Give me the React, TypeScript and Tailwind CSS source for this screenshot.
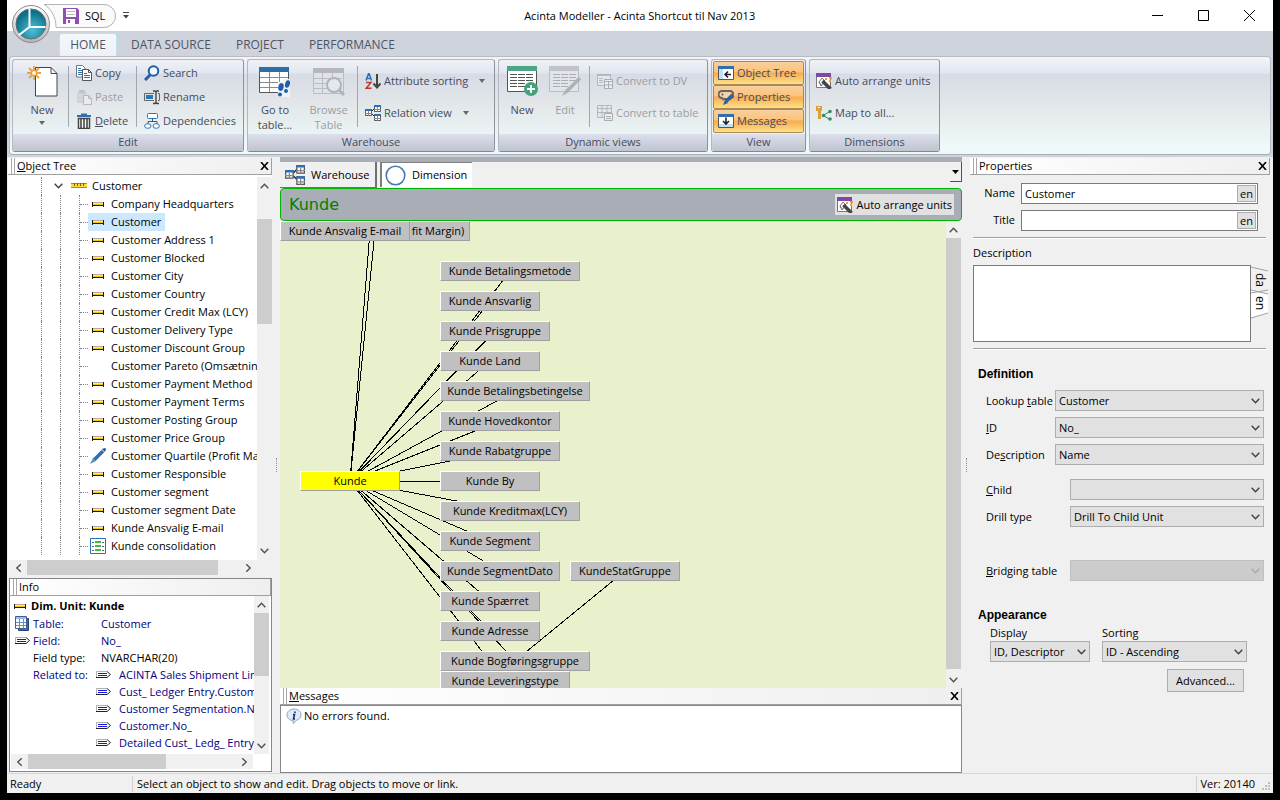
import type { ReactNode } from "react";
import clsx from "clsx";

type IconProps = { className?: string };

/* ---------- Icons ---------- */

const Svg = ({ size = 16, children }: { size?: number; children: ReactNode }) => (
  <svg width={size} height={size} viewBox={`0 0 ${size} ${size}`} fill="none" className="shrink-0" aria-hidden="true">
    {children}
  </svg>
);

const SaveIcon = () => (
  <Svg>
    <path d="M0 0h14l2 2v14H0z" fill="#8e4fb0" />
    <path d="M3 1h10v8H3z" fill="#fff" />
    <path d="M4 3.500h8M4 6.500h8" stroke="#b9b9b9" />
    <path d="M3 11h9v5H3z" fill="#fff" />
    <path d="M5 12h2v3H5z" fill="#8e4fb0" />
  </Svg>
);

const NewPageIcon = () => (
  <Svg size={32}>
    <path d="M9.500 2.500h15.500l6 6v22.500h-21.500z" fill="#fff" stroke="#444" />
    <path d="M25 2.500v6h6" stroke="#444" />
    <path d="M8 1v14M1 8h14M3 3l10 10M13 3L3 13" stroke="#e8a33d" strokeWidth="1.800" />
    <circle cx="8" cy="8" r="3.500" fill="#e8a33d" />
    <circle cx="8" cy="8" r="2" fill="#fff3dc" />
  </Svg>
);

const CopyIcon = () => (
  <Svg>
    <path d="M.5.500h6l2.500 2.500v9h-8.500z" fill="#fff" stroke="#777" />
    <path d="M2 3.500h3M2 5.500h4M2 7.500h4M2 9.500h4" stroke="#2e75b6" />
    <path d="M6.500 4.500h6l3 3v8h-9z" fill="#fff" stroke="#555" />
    <path d="M12.500 4.500v3h3" stroke="#555" />
    <path d="M8 8.500h3M8 10.500h6M8 12.500h6" stroke="#2e75b6" />
  </Svg>
);

const PasteIcon = () => (
  <Svg>
    <path d="M1 3h10v11H1z" fill="#d0d3d8" />
    <path d="M3 1h6v3H3z" fill="#bfc2c7" />
    <path d="M7.500 6.500h5l3 3v6h-8z" fill="#e9ebee" stroke="#b4b7bc" />
    <path d="M12.500 6.500v3h3" stroke="#b4b7bc" />
  </Svg>
);

const DeleteIcon = () => (
  <Svg>
    <path d="M1 3h14M5 1.500h6" stroke="#2e6fb4" strokeWidth="1.800" />
    <path d="M2.500 5.500h11v10h-11z" fill="#fff" stroke="#444" strokeWidth="1.500" />
    <path d="M5 6v9M8 6v9M11 6v9" stroke="#444" strokeWidth="1.600" />
  </Svg>
);

const SearchIcon = () => (
  <Svg>
    <circle cx="9.500" cy="6" r="4.800" fill="#f4f8ff" stroke="#1f5fa8" strokeWidth="2" />
    <path d="M6 10l-5 5" stroke="#1f5fa8" strokeWidth="3" />
  </Svg>
);

const RenameIcon = () => (
  <Svg>
    <path d="M10 4.500H.5v7H10M14 4.500h1.500v7H14" stroke="#666" />
    <path d="M2 6h7v4H2z" fill="#2e75b6" />
    <path d="M9 2h2l1 1 1-1h2M9 14.500h2l1-1 1 1h2M12 3v11" stroke="#444" strokeWidth="1.400" />
  </Svg>
);

const DependenciesIcon = () => (
  <Svg>
    <rect x="3.500" y=".5" width="10" height="5" rx="1" fill="#fff" stroke="#2e75b6" />
    <path d="M8.500 6v3M4 11V8.500h9V11" stroke="#555" />
    <ellipse cx="3.800" cy="13" rx="3.200" ry="2.300" fill="#fff" stroke="#2e75b6" />
    <ellipse cx="12.200" cy="13" rx="3.200" ry="2.300" fill="#fff" stroke="#2e75b6" />
  </Svg>
);

const GoToTableIcon = () => (
  <Svg size={32}>
    <path d="M.5 2.500h29v25H.5z" fill="#fff" stroke="#555" />
    <path d="M0 2h30v5H0z" fill="#2e6da8" />
    <path d="M1 12.500h28M1 17.500h28M1 22.500h28M10.500 7v20M20.500 7v20" stroke="#8a8a8a" />
    <path d="M19 27V17h5v-3h7v18H19z" fill="#eef1f6" />
    <ellipse cx="22" cy="22" rx="2.600" ry="4" fill="#1f5fa8" transform="rotate(15 22 22)" />
    <circle cx="21" cy="29.500" r="2" fill="#1f5fa8" />
    <ellipse cx="28.500" cy="19" rx="2.400" ry="3.800" fill="#1f5fa8" transform="rotate(15 28.500 19)" />
    <circle cx="27" cy="26" r="2" fill="#1f5fa8" />
  </Svg>
);

const BrowseTableIcon = () => (
  <Svg size={32}>
    <path d="M.5 3.500h30v25H.5z" fill="#dfe2e8" stroke="#b9bcc2" />
    <path d="M0 3h31v5H0z" fill="#b4b7bd" />
    <path d="M1 13.500h28M1 18.500h28M1 23.500h28M9.500 8v20M19.500 8v20" stroke="#b9bcc2" />
    <circle cx="21" cy="20" r="7" fill="#e4e7ec" stroke="#b0b3b8" strokeWidth="2" />
    <path d="M26 25l5 5" stroke="#b0b3b8" strokeWidth="3" />
  </Svg>
);

const SortIcon = () => (
  <Svg>
    <path d="M1 7.500L3.500.8h.6L6.600 7.500M2 5.500h3.600" stroke="#2e6fb4" strokeWidth="1.500" />
    <path d="M1 9.500h5L1.200 15.200H6.500" stroke="#c0392b" strokeWidth="1.500" />
    <path d="M12 1v13M8.500 10.500L12 14.500l3.500-4" stroke="#444" strokeWidth="2" />
  </Svg>
);

const MiniTable = ({ x, y }: { x: number; y: number }) => (
  <g>
    <path d={`M${x + 0.5} ${y + 0.5}h6v6h-6z`} fill="#fff" stroke="#555" />
    <path d={`M${x} ${y}h7v2h-7z`} fill="#2e6fb4" />
    <path d={`M${x + 3.5} ${y + 2}v5M${x} ${y + 4.5}h7`} stroke="#888" />
  </g>
);

const RelationIcon = ({ size = 16 }: { size?: number }) => (
  <svg width={size} height={size} viewBox="0 0 16 16" fill="none" className="shrink-0" aria-hidden="true">
    <path d="M6 7l4-4M6 8l4 4" stroke="#222" />
    <MiniTable x={0} y={4} />
    <MiniTable x={9} y={0} />
    <MiniTable x={9} y={9} />
  </svg>
);

const SheetLines = ({ stroke }: { stroke: string }) => (
  <path
    d="M4 9.500h7M4 12.500h7M4 15.500h7M4 18.500h7M4 21.500h7M12 9.500h7M12 12.500h7M12 15.500h7M12 18.500h7M12 21.500h7M20 9.500h7M20 12.500h7M20 15.500h7"
    stroke={stroke}
    strokeWidth="1.200"
  />
);

const NewViewIcon = () => (
  <Svg size={32}>
    <path d="M1.500 2.500h29v24h-29z" fill="#fff" stroke="#555" />
    <path d="M1 1h30v5H1z" fill="#4ca585" />
    <SheetLines stroke="#555" />
    <circle cx="25" cy="24" r="7" fill="#45a37c" />
    <path d="M25 20v8M21 24h8" stroke="#fff" strokeWidth="1.800" />
  </Svg>
);

const EditViewIcon = () => (
  <Svg size={32}>
    <path d="M.5 2.500h29v24H.5z" fill="#e1e4e9" stroke="#b9bcc2" />
    <path d="M0 1h30v5H0z" fill="#c0c3c9" />
    <SheetLines stroke="#abaeb4" />
    <path d="M31 13L18 26" stroke="#aeb1b6" strokeWidth="3.500" />
    <path d="M17 24l-4 7 7-4z" fill="#aeb1b6" />
  </Svg>
);

const ConvertDvIcon = () => (
  <Svg>
    <path d="M.5 1.500h13v11H.5z" fill="#e4e7ec" stroke="#b4b7bc" />
    <path d="M0 1h14v2H0z" fill="#b4b7bc" />
    <path d="M2 5.500h4M2 7.500h4M2 9.500h4" stroke="#b4b7bc" />
    <path d="M7.500 6.500h8v9h-8z" fill="#eceef1" stroke="#a9acb1" />
    <path d="M7 8.500h9M7 12h9M11.500 8v8" stroke="#a9acb1" />
  </Svg>
);

const ConvertTableIcon = () => (
  <Svg>
    <path d="M.5.500h14v12H.5z" fill="#e4e7ec" stroke="#b4b7bc" />
    <path d="M0 3.500h15M0 7.500h15M5 1v11M10 1v11" stroke="#b4b7bc" />
    <path d="M7.500 8.500h8v7h-8z" fill="#eceef1" stroke="#a9acb1" />
    <path d="M9 11.500h5M9 13.500h5" stroke="#a9acb1" />
  </Svg>
);

const TreePanelIcon = () => (
  <Svg>
    <path d="M.5 1.500h15v13H.5z" fill="#fff" stroke="#555" />
    <path d="M0 1h16v3H0z" fill="#2e6fb4" />
    <path d="M1 4h4v10H1z" fill="#bfe0f5" />
    <path d="M13 9.500H7M10 6.500l-3 3 3 3" stroke="#222" strokeWidth="1.600" />
  </Svg>
);

const PropertiesIcon = () => (
  <Svg>
    <path d="M4 2h9l2 2v4l-3 2H6M4 2a3.500 3.500 0 000 7l2 2" fill="#f4d3a4" stroke="#666" strokeWidth="2" />
    <circle cx="4.500" cy="5.500" r="1" fill="#555" />
    <path d="M14.500 6L8 12.500" stroke="#2463a8" strokeWidth="3.500" />
    <path d="M7 11l-2 5 5-2z" fill="#2463a8" />
  </Svg>
);

const MessagesPanelIcon = () => (
  <Svg>
    <path d="M.5 1.500h15v13H.5z" fill="#fff" stroke="#555" />
    <path d="M0 1h16v3H0z" fill="#2e6fb4" />
    <path d="M1 11h14v3H1z" fill="#bfe0f5" />
    <path d="M8 4.500v6M5 8l3 3 3-3" stroke="#222" strokeWidth="1.600" />
  </Svg>
);

const ArrangeIcon = () => (
  <Svg>
    <path d="M.5 1.500h14v13H.5z" fill="#fff" stroke="#777" />
    <path d="M0 0h15v4H0z" fill="#7e48a5" />
    <path d="M3 9l3-4 3 3-4 5zM3 9l3 4" stroke="#777" />
    <path d="M6.500 8l8 8" stroke="#444" strokeWidth="3.500" />
    <path d="M9 5h2v2H9zM13 7h2v2h-2zM13 4h3v2h-3z" fill="#e8a33d" />
  </Svg>
);

const MapIcon = () => (
  <Svg>
    <path d="M0 1h6v5H5v8H2V6H0z" fill="#dca13d" />
    <path d="M2 2.500h2" stroke="#fff" />
    <path d="M7 10.500l7-4M7 10.500l7 4" stroke="#2f8f63" />
    <circle cx="7.500" cy="10.500" r="1.800" fill="#2f8f63" />
    <circle cx="14" cy="6.500" r="1.800" fill="#2f8f63" />
    <circle cx="14" cy="14" r="1.800" fill="#2f8f63" />
  </Svg>
);

const UnitIcon = () => (
  <Svg>
    <path d="M3 6h10v1H3z" fill="#b9a9a0" />
    <path d="M3 7h10v1H3z" fill="#fff35c" />
    <path d="M3 8h10v1H3z" fill="#f0c800" />
    <path d="M3 9h10v1H3zM2 6h1v5H2zM13 6h1v5h-1z" fill="#1a1a1a" />
  </Svg>
);

const DimensionIcon = () => (
  <Svg>
    <path d="M0 5h16v5H0z" fill="#b8860b" />
    <path d="M0 6h16v3H0z" fill="#ffd83c" />
    <path d="M3.500 5v3M6.500 5v3M9.500 5v3M12.500 5v3" stroke="#8a5c00" />
  </Svg>
);

const PencilIcon = () => (
  <Svg>
    <path d="M13 3L4 12" stroke="#2e6fb4" strokeWidth="3.500" />
    <path d="M3 10l-3 6 6-3z" fill="#5d8fc4" />
    <path d="M12 1l3-1 1 1-1 3z" fill="#1d4f8b" />
  </Svg>
);

const ConsolidationIcon = () => (
  <Svg>
    <path d="M.5.500h15v15H.5z" fill="#fff" stroke="#2e6fb4" />
    <path d="M2 4.500h2M2 8.500h2M2 12.500h2M12 4.500h2M12 8.500h2M12 12.500h2" stroke="#4d6c8d" />
    <path d="M5 4h6M5 8h6M5 12h6" stroke="#49b63d" strokeWidth="2" />
  </Svg>
);

const TablesIcon = () => (
  <Svg>
    <path d="M3.500 2.500h10v12h-10z" fill="#3d6cb5" stroke="#23427c" />
    <path d="M.5.500h11v12H.5z" fill="#fff" stroke="#3f5f96" />
    <path d="M1 1h10v2H1z" fill="#9dbbe6" />
    <path d="M1 6.500h10M1 9.500h10M4.500 3v9M8.500 3v9" stroke="#6d8cc0" />
  </Svg>
);

const FieldIcon = () => (
  <Svg>
    <path d="M.5 4.500H11l4 3-4 3H.5z" fill="#fff" />
    <path d="M.5 11V4.500H11" stroke="#b0b0b0" />
    <path d="M0 10.500h11l3.500-3-3.500-3" stroke="#222" />
    <path d="M2 6h9v1H2zM2 8h9v1H2z" fill="#1414f0" />
  </Svg>
);

const InfoIcon = () => (
  <Svg>
    <path d="M8 1c4 0 7 2.400 7 5.800 0 3-2 4.800-4.500 5.500L7 15.500l.3-2.800C3.800 12.500 1 10.200 1 7c0-3.500 3-6 7-6z" fill="#dfeaf7" stroke="#8ba6c1" />
    <path d="M9 3.500v1.600M7 6.500h1.500L7.500 11H9" stroke="#1d2d7c" strokeWidth="1.600" />
  </Svg>
);

const Orb = () => (
  <svg width="40" height="40" viewBox="0 0 40 40" aria-hidden="true">
    <defs>
      <linearGradient id="rim" x1="0" y1="0" x2="0" y2="1">
        <stop offset="0" stopColor="#fff" />
        <stop offset="1" stopColor="#b5b5b5" />
      </linearGradient>
      <radialGradient id="face" cx=".55" cy=".7" r=".6">
        <stop offset="0" stopColor="#4fc0d6" />
        <stop offset="1" stopColor="#0a7188" />
      </radialGradient>
    </defs>
    <circle cx="20" cy="20" r="18.500" fill="url(#rim)" stroke="#8a8a8a" />
    <circle cx="20" cy="20" r="15" fill="url(#face)" stroke="#5b6e74" />
    <path d="M18.500 5v18M18.500 23h16M18.500 23L8 31" stroke="#fff" strokeWidth="2" fill="none" />
  </svg>
);

const CloseIcon = ({ className }: IconProps) => (
  <svg width="9" height="8" viewBox="0 0 9 8" className={className} aria-hidden="true">
    <path d="M1 0l7 8M8 0L1 8" stroke="#000" strokeWidth="1.600" />
  </svg>
);

const Caret = () => (
  <svg width="6" height="4" viewBox="0 0 6 4" className="shrink-0" aria-hidden="true">
    <path d="M0 0h6L3 4z" fill="#666" />
  </svg>
);

const Chevron = ({ className }: IconProps) => (
  <svg width="9" height="6" viewBox="0 0 9 6" fill="none" className={className} aria-hidden="true">
    <path d="M.7.700l3.800 4L8.300.700" stroke="currentColor" strokeWidth="1.400" />
  </svg>
);

/* ---------- Ribbon ---------- */

const RibbonGroup = ({ title, className, children }: { title: string; className?: string; children: ReactNode }) => (
  <section className={clsx("flex flex-col shrink-0 rounded-[3px] border border-[#b4b7bf] border-b-[#85878d] border-r-[#8f9299] overflow-hidden", className)}>
    <div className="flex flex-1 pt-px">{children}</div>
    <h2 className="h-[17px] text-center leading-4 bg-linear-to-b from-[#dcdfec] to-[#c0c4cf]">{title}</h2>
  </section>
);

const BigButton = ({ icon, label, disabled, className, caret }: { icon: ReactNode; label: ReactNode; disabled?: boolean; className?: string; caret?: boolean }) => (
  <button disabled={disabled} className={clsx("flex flex-col items-center pt-1 leading-[15px] disabled:text-[#9a9da3]", className)}>
    {icon}
    <span className="mt-[5px]">{label}</span>
    {caret && <span className="mt-1"><Caret /></span>}
  </button>
);

const SmallButton = ({ icon, label, disabled, tall, caret }: { icon: ReactNode; label: ReactNode; disabled?: boolean; tall?: boolean; caret?: boolean }) => (
  <button disabled={disabled} className={clsx("flex items-center gap-[3px] whitespace-nowrap disabled:text-[#9a9da3]", tall ? "h-8" : "h-6")}>
    {icon}
    <span>{label}</span>
    {caret && <span className="ml-2"><Caret /></span>}
  </button>
);

const Separator = () => <div className="w-px h-[61px] mt-[5px] mr-[7px] bg-[#a3a6ac]" />;

const viewToggles = [
  { label: "Object Tree", icon: <TreePanelIcon /> },
  { label: "Properties", icon: <PropertiesIcon /> },
  { label: "Messages", icon: <MessagesPanelIcon /> },
];

const Ribbon = () => (
  <div className="bg-[#cfd3dc] px-0.5 pb-0.5">
    <div className="flex gap-[3px] h-[99px] p-0.5 rounded border border-[#b9bcc4] border-b-[#a9aeb6] bg-[linear-gradient(#f3f4f9_0px,#e2e6ef_16px,#d6dbe6_17px,#e3e7e9_48px,#eef9f9_90px)] text-[#444b5c]">
      <RibbonGroup title="Edit" className="w-[232px]">
        <BigButton icon={<NewPageIcon />} label="New" caret className="w-[48px] ml-[7px] pr-1" />
        <Separator />
        <div className="w-[60px]">
          <SmallButton icon={<CopyIcon />} label="Copy" />
          <SmallButton icon={<PasteIcon />} label="Paste" disabled />
          <SmallButton icon={<DeleteIcon />} label={<><u>D</u>elete</>} />
        </div>
        <Separator />
        <div>
          <SmallButton icon={<SearchIcon />} label="Search" />
          <SmallButton icon={<RenameIcon />} label="Rename" />
          <SmallButton icon={<DependenciesIcon />} label="Dependencies" />
        </div>
      </RibbonGroup>

      <RibbonGroup title="Warehouse" className="w-[248px]">
        <BigButton icon={<GoToTableIcon />} label={<>Go to<br />table...</>} className="w-[54px]" />
        <BigButton icon={<BrowseTableIcon />} label={<>Browse<br />Table</>} disabled className="w-[53px] mr-0.5" />
        <Separator />
        <div className="pt-1">
          <SmallButton icon={<SortIcon />} label="Attribute sorting" tall caret />
          <SmallButton icon={<RelationIcon />} label="Relation view" tall caret />
        </div>
      </RibbonGroup>

      <RibbonGroup title="Dynamic views" className="w-[210px]">
        <BigButton icon={<NewViewIcon />} label="New" className="w-[46px]" />
        <BigButton icon={<EditViewIcon />} label="Edit" disabled className="w-[40px] mr-1" />
        <Separator />
        <div className="pt-1">
          <SmallButton icon={<ConvertDvIcon />} label="Convert to DV" tall disabled />
          <SmallButton icon={<ConvertTableIcon />} label="Convert to table" tall disabled />
        </div>
      </RibbonGroup>

      <RibbonGroup title="View" className="w-[95px]">
        <div className="flex-1 px-px">
          {viewToggles.map(({ label, icon }) => (
            <button
              key={label}
              aria-pressed="true"
              className="flex items-center gap-[3px] w-full h-6 px-1 border border-[#a8895a] rounded-[2px] bg-[linear-gradient(#f9cf9c_0%,#fbc37d_45%,#f9ab4b_50%,#fde08a_100%)] whitespace-nowrap"
            >
              {icon}
              <span>{label}</span>
            </button>
          ))}
        </div>
      </RibbonGroup>

      <RibbonGroup title="Dimensions" className="w-[131px]">
        <div className="pt-1 pl-1.5">
          <SmallButton icon={<ArrangeIcon />} label="Auto arrange units" tall />
          <SmallButton icon={<MapIcon />} label="Map to all..." tall />
        </div>
      </RibbonGroup>
    </div>
  </div>
);

/* ---------- Title bar ---------- */

const TitleBar = () => (
  <header className="relative flex items-center h-[31px] pr-px bg-white">
    <svg width="75" height="26" viewBox="0 0 75 26" fill="none" className="absolute left-9 top-1" aria-hidden="true">
      <path d="M1 .5H61a11.500 11.500 0 010 23H13C13 14 9 5 1 .5z" fill="#fafafa" stroke="#b4b4b4" />
    </svg>
    <button aria-label="Application menu" className="absolute left-1 top-1 z-10">
      <Orb />
    </button>
    <button className="relative flex items-center gap-1.5 ml-14">
      <SaveIcon />
      <span>SQL</span>
    </button>
    <button aria-label="Customize toolbar" className="ml-[18px]">
      <svg width="6" height="7" viewBox="0 0 6 7" aria-hidden="true">
        <path d="M0 .5h6" stroke="#444" />
        <path d="M0 3h6L3 6.500z" fill="#444" />
      </svg>
    </button>
    <h1 className="flex-1 pl-4 text-center">Acinta Modeller - Acinta Shortcut til Nav 2013</h1>
    <button aria-label="Minimize" className="w-[46px] flex justify-center">
      <svg width="11" height="11" aria-hidden="true"><path d="M0 5.500h11" stroke="#000" /></svg>
    </button>
    <button aria-label="Maximize" className="w-[46px] flex justify-center">
      <svg width="11" height="11" fill="none" aria-hidden="true"><path d="M.5.500h10v10H.5z" stroke="#000" /></svg>
    </button>
    <button aria-label="Close" className="w-[46px] flex justify-center">
      <svg width="11" height="11" aria-hidden="true"><path d="M0 0l11 11M11 0L0 11" stroke="#000" /></svg>
    </button>
  </header>
);

const RibbonTabs = () => (
  <nav className="flex h-[25px] pt-0.5 pl-[52px] bg-[#cfd3dc] text-xs text-[#4d5464]">
    <button className="w-[58px] rounded-t-[3px] border border-b-0 border-[#b9e4ea] bg-linear-to-b from-[#f4f9fb] to-[#eef0f6]">HOME</button>
    <button className="ml-3.5">DATA SOURCE</button>
    <button className="ml-[25px]">PROJECT</button>
    <button className="ml-[25px]">PERFORMANCE</button>
  </nav>
);

/* ---------- Shared panel parts ---------- */

const PanelHeader = ({ title, closable }: { title: ReactNode; closable?: boolean }) => (
  <div className="flex items-center shrink-0 h-[17px] pl-[3px] pr-0.5 border-b border-r border-[#a0a0a0] bg-linear-to-r from-white to-[#efefef]">
    <span className="w-1 h-full mr-0.5 border-x border-[#a8a8a8]" />
    <h2 className="flex-1">{title}</h2>
    {closable && (
      <button aria-label="Close panel">
        <CloseIcon />
      </button>
    )}
  </div>
);

// thumb and rest are flex weights, so the bar keeps its proportions
const VScroll = ({ before, thumb, after, className }: { before: number; thumb: number; after: number; className?: string }) => (
  <div className={clsx("flex flex-col shrink-0 w-[15px] bg-[#f0f0f0] text-[#505050]", className)}>
    <span className="flex items-center justify-center h-[17px]"><Chevron className="rotate-180" /></span>
    <span style={{ flexGrow: before }} />
    <span className="bg-[#cdcdcd]" style={{ flexGrow: thumb }} />
    <span style={{ flexGrow: after }} />
    <span className="flex items-center justify-center h-[17px]"><Chevron /></span>
  </div>
);

const HScroll = ({ thumb, after, className }: { thumb: number; after: number; className?: string }) => (
  <div className={clsx("flex shrink-0 h-[15px] bg-[#f0f0f0] text-[#505050]", className)}>
    <span className="flex items-center justify-center w-[17px]"><Chevron className="rotate-90" /></span>
    <span className="bg-[#cdcdcd]" style={{ flexGrow: thumb }} />
    <span style={{ flexGrow: after }} />
    <span className="flex items-center justify-center w-[17px]"><Chevron className="-rotate-90" /></span>
  </div>
);

const Splitter = () => (
  <div className="flex items-center justify-center w-2 shrink-0">
    <span className="h-3.5 border-l border-dotted border-[#909090]" />
  </div>
);

/* ---------- Object tree ---------- */

const treeItems: { label: string; icon: "unit" | "pencil" | "list" | "none" }[] = [
  { label: "Company Headquarters", icon: "unit" },
  { label: "Customer", icon: "unit" },
  { label: "Customer Address 1", icon: "unit" },
  { label: "Customer Blocked", icon: "unit" },
  { label: "Customer City", icon: "unit" },
  { label: "Customer Country", icon: "unit" },
  { label: "Customer Credit Max (LCY)", icon: "unit" },
  { label: "Customer Delivery Type", icon: "unit" },
  { label: "Customer Discount Group", icon: "unit" },
  { label: "Customer Pareto (Omsætnin", icon: "none" },
  { label: "Customer Payment Method", icon: "unit" },
  { label: "Customer Payment Terms", icon: "unit" },
  { label: "Customer Posting Group", icon: "unit" },
  { label: "Customer Price Group", icon: "unit" },
  { label: "Customer Quartile (Profit Ma", icon: "pencil" },
  { label: "Customer Responsible", icon: "unit" },
  { label: "Customer segment", icon: "unit" },
  { label: "Customer segment Date", icon: "unit" },
  { label: "Kunde Ansvalig E-mail", icon: "unit" },
  { label: "Kunde consolidation", icon: "list" },
];

const treeIcons = {
  unit: <UnitIcon />,
  pencil: <PencilIcon />,
  list: <ConsolidationIcon />,
  none: <span className="w-4" />,
};

const ObjectTree = () => (
  <section className="flex flex-col flex-1 min-h-0">
    <PanelHeader title={<><u>O</u>bject Tree</>} closable />
    <div className="flex flex-1 min-h-0 pt-0.5 bg-white">
      <ul className="flex-1 min-w-0 overflow-hidden whitespace-nowrap">
        <li className="flex items-center h-[18px] pl-[33px]">
          <span className="w-[13px] h-full border-l border-dotted border-[#808080]" />
          <button aria-label="Collapse Customer" className="flex items-center w-[17px] text-[#404040]"><Chevron /></button>
          <DimensionIcon />
          <span className="ml-[5px]">Customer</span>
        </li>
        {treeItems.map(({ label, icon }) => (
          <li key={label} className="flex h-[18px] pl-[33px]">
            <span className="w-[19px] shrink-0 border-l border-dotted border-[#808080]" />
            <span className="w-[19px] shrink-0 border-l border-dotted border-[#808080]" />
            <span className="w-[9px] shrink-0 border-l border-dotted border-[#808080]">
              <span className="block h-2.5 border-b border-dotted border-[#808080]" />
            </span>
            <span className={clsx("flex items-center pl-0.5 pr-1", label === "Customer" && "bg-[#cce8ff]")}>
              {treeIcons[icon]}
              <span className="ml-[5px]">{label}</span>
            </span>
          </li>
        ))}
      </ul>
      <VScroll before={25} thumb={104} after={218} />
    </div>
    <HScroll thumb={190} after={22} className="ml-0.5 mr-[15px]" />
  </section>
);

/* ---------- Info ---------- */

const related = [
  "ACINTA Sales Shipment Lin",
  "Cust_ Ledger Entry.Custom",
  "Customer Segmentation.N",
  "Customer.No_",
  "Detailed Cust_ Ledg_ Entry",
];

const InfoPanel = () => (
  <section className="flex flex-col h-[194px] mt-[3px] ml-px border border-[#828790] bg-white">
    <PanelHeader title="Info" />
    <div className="flex flex-1 min-h-0 pr-0.5">
      <div className="flex-1 min-w-0 overflow-hidden whitespace-nowrap text-[#000080]">
        <h3 className="flex items-center gap-[3px] h-[19px] pl-0.5 font-bold text-black"><UnitIcon />Dim. Unit: Kunde</h3>
        <div className="flex items-center h-[17px] pl-[5px]">
          <TablesIcon />
          <span className="w-[68px] ml-0.5">Table:</span>
          <span>Customer</span>
        </div>
        <div className="flex items-center h-[17px] pl-[5px]">
          <FieldIcon />
          <span className="w-[68px] ml-0.5">Field:</span>
          <span>No_</span>
        </div>
        <div className="flex items-center h-[17px] pl-[23px] text-black">
          <span className="w-[68px]">Field type:</span>
          <span>NVARCHAR(20)</span>
        </div>
        <div className="flex pl-[23px] leading-[17px]">
          <span className="w-[63px] shrink-0">Related to:</span>
          <ul>
            {related.map((item) => (
              <li key={item} className="flex items-center gap-[7px] h-[17px]">
                <FieldIcon />
                <a href="#">{item}</a>
              </li>
            ))}
          </ul>
        </div>
      </div>
      <VScroll before={0} thumb={61} after={60} />
    </div>
    <HScroll thumb={139} after={70} className="ml-px mb-0.5 mr-[18px]" />
  </section>
);

/* ---------- Diagram ---------- */

type Unit = { label: string; x: number; y: number; w: number };

const root: Unit = { label: "Kunde", x: 20, y: 250, w: 100 };
const postingGroup: Unit = { label: "Kunde Bogføringsgruppe", x: 160, y: 430, w: 150 };
const statGroup: Unit = { label: "KundeStatGruppe", x: 290, y: 340, w: 110 };

const children: Unit[] = [
  { label: "Kunde Betalingsmetode", x: 160, y: 40, w: 140 },
  { label: "Kunde Ansvarlig", x: 160, y: 70, w: 100 },
  { label: "Kunde Prisgruppe", x: 160, y: 100, w: 110 },
  { label: "Kunde Land", x: 160, y: 130, w: 100 },
  { label: "Kunde Betalingsbetingelse", x: 160, y: 160, w: 150 },
  { label: "Kunde Hovedkontor", x: 160, y: 190, w: 120 },
  { label: "Kunde Rabatgruppe", x: 160, y: 220, w: 120 },
  { label: "Kunde By", x: 160, y: 250, w: 100 },
  { label: "Kunde Kreditmax(LCY)", x: 160, y: 280, w: 140 },
  { label: "Kunde Segment", x: 160, y: 310, w: 100 },
  { label: "Kunde SegmentDato", x: 160, y: 340, w: 120 },
  { label: "Kunde Spærret", x: 160, y: 370, w: 100 },
  { label: "Kunde Adresse", x: 160, y: 400, w: 100 },
  postingGroup,
  { label: "Kunde Leveringstype", x: 160, y: 450, w: 130 },
];

const topUnits: Unit[] = [
  { label: "fit Margin)", x: 126, y: 0, w: 64 },
  { label: "Kunde Ansvalig E-mail", x: 0, y: 0, w: 130 },
];

const center = (u: Unit) => ({ x: u.x + u.w / 2, y: u.y + 10 });

const Link = ({ from, to }: { from: { x: number; y: number }; to: { x: number; y: number } }) => (
  <line x1={from.x} y1={from.y} x2={to.x} y2={to.y} stroke="#000" shapeRendering="crispEdges" />
);

const Diagram = () => (
  <div className="relative flex-1 overflow-hidden bg-[#e9f0cc]">
    <svg className="absolute inset-0 w-full h-full" aria-hidden="true">
      <Link from={center(root)} to={{ x: 90, y: 10 }} />
      <Link from={center(root)} to={{ x: 95, y: 10 }} />
      {children.map((u) => (
        <Link key={u.label} from={center(root)} to={center(u)} />
      ))}
      <Link from={center(statGroup)} to={center(postingGroup)} />
    </svg>
    {[root, ...children, statGroup, ...topUnits].map((u) => (
      <button
        key={u.label}
        className={clsx(
          "absolute h-5 border border-t-white border-l-white border-r-[#a0a0a0] border-b-[#a0a0a0] leading-[18px] whitespace-nowrap",
          u === root ? "bg-[#ffff00]" : "bg-[#c0c0c0]",
        )}
        style={{ left: u.x, top: u.y, width: u.w }}
      >
        {u.label}
      </button>
    ))}
  </div>
);

const Workspace = () => (
  <main className="flex flex-col flex-1 min-w-0">
    <div className="h-[5px] shrink-0 bg-[#a9aeb6]" />
    <div className="flex shrink-0 h-[26px]">
      <button className="flex items-center gap-1.5 w-[97px] pl-[5px] border-r-2 border-b border-[#707070] bg-[#f0f0f0]">
        <RelationIcon size={20} />
        Warehouse
      </button>
      <button className="flex items-center gap-1.5 w-[92px] h-[25px] pl-[3px] ml-[3px] border-l-2 border-t border-[#808080] bg-white">
        <svg width="21" height="21" fill="none" aria-hidden="true"><circle cx="10.500" cy="10.500" r="9.300" stroke="#4a7ab5" strokeWidth="1.600" /></svg>
        Dimension
      </button>
      <button aria-label="Tab list" className="flex items-center justify-center w-3 h-5 ml-auto border-r border-b border-[#505050]">
        <svg width="7" height="4" aria-hidden="true"><path d="M0 0h7L3.500 4z" fill="#000" /></svg>
      </button>
    </div>
    <div className="flex items-center justify-between shrink-0 h-[33px] pl-2 pr-[7px] rounded border border-[#00b400] bg-[#a9aeb6]">
      <h2 className="text-base text-[#008000] font-['DejaVu_Sans',Verdana,sans-serif]">Kunde</h2>
      <button className="flex items-center gap-1 h-[21px] px-0.5 bg-[#e1e1e1]">
        <ArrangeIcon />
        Auto arrange units
      </button>
    </div>
    <div className="flex flex-1 min-h-0">
      <Diagram />
      <VScroll before={0} thumb={430} after={2} className="mr-px" />
    </div>
    <section className="flex flex-col shrink-0 h-[85px]">
      <PanelHeader title={<><u>M</u>essages</>} closable />
      <div className="flex-1 pt-0.5 pl-[5px] border border-[#828790] bg-white">
        <p className="flex items-center gap-0.5"><InfoIcon />No errors found.</p>
      </div>
    </section>
  </main>
);

/* ---------- Properties ---------- */

const Select = ({ id, value, disabled, className }: { id: string; value: string; disabled?: boolean; className?: string }) => (
  <div className={clsx("relative", className)}>
    <select
      id={id}
      disabled={disabled}
      defaultValue={value}
      className="block w-full h-[21px] pl-[3px] pr-5 appearance-none border border-[#adadad] bg-[#e1e1e1] disabled:border-[#bfbfbf] disabled:bg-[#cccccc]"
    >
      <option>{value}</option>
    </select>
    <Chevron className={clsx("absolute right-1 top-2 pointer-events-none", disabled ? "text-[#a8a8a8]" : "text-[#404040]")} />
  </div>
);

const TextRow = ({ id, label, value }: { id: string; label: string; value: string }) => (
  <div className="flex items-center">
    <label htmlFor={id} className="w-[42px] mr-1.5 text-right leading-4 pb-0.5">{label}</label>
    <div className="flex flex-1 h-[21px] border border-[#7a7a7a] bg-white">
      <input id={id} defaultValue={value} className="flex-1 min-w-0 px-[3px] outline-none" />
      <button aria-label={`${label} language`} className="w-[19px] my-px mr-px border border-[#adadad] bg-[#e1e1e1] leading-4">en</button>
    </div>
  </div>
);

const Field = ({ id, label, value, disabled, narrow }: { id: string; label: ReactNode; value: string; disabled?: boolean; narrow?: boolean }) => (
  <div className="flex items-center">
    <label htmlFor={id} className={clsx("shrink-0 whitespace-nowrap", narrow ? "w-[84px]" : "w-[69px]")}>{label}</label>
    <Select id={id} value={value} disabled={disabled} className="flex-1" />
  </div>
);

const Rule = () => <hr className="mr-1 border-t border-b border-t-[#a0a0a0] border-b-white" />;

const PropertiesPanel = () => (
  <aside className="flex flex-col w-[303px] shrink-0 pr-[3px] pt-px">
    <PanelHeader title="Properties" closable />
    <div className="pl-[3px]">
      <div className="flex flex-col gap-1.5 mt-2 pr-3">
        <TextRow id="name" label="Name" value="Customer" />
        <TextRow id="title" label="Title" value="" />
      </div>
      <div className="mt-1.5"><Rule /></div>
      <label htmlFor="description" className="block mt-1 leading-5">Description</label>
      <div className="flex mt-0.5 mb-1.5">
        <textarea id="description" className="flex-1 h-[77px] resize-none border border-[#7a7a7a] bg-white outline-none" />
        <div className="relative w-[19px] text-xs">
          <svg width="17" height="54" className="absolute left-0 top-0" fill="none" aria-hidden="true">
            <path d="M0 25l17 4v19l-17 5z" fill="#fff" />
            <path d="M0 2l17 4M0 25l17 4M0 28l17-3M0 53l17-5" stroke="#a0a0a0" />
          </svg>
          <button className="relative block mt-[7px] ml-px h-4 leading-4 [writing-mode:vertical-rl]">da</button>
          <button className="relative block mt-[7px] ml-px h-4 leading-4 [writing-mode:vertical-rl]">en</button>
        </div>
      </div>
      <Rule />

      <div className="pl-[5px] pr-[6px]">
        <h3 className="mt-4 mb-2 leading-4 text-xs font-bold font-['Liberation_Sans',Arial,sans-serif]">Definition</h3>
        <div className="flex flex-col gap-1.5 pl-2">
          <Field id="lookup" label={<>Lookup <u>t</u>able</>} value="Customer" />
          <Field id="unit-id" label={<><u>I</u>D</>} value="No_" />
          <Field id="descriptor" label={<>De<u>s</u>cription</>} value="Name" />
        </div>
        <div className="flex flex-col gap-1.5 mt-3.5 pl-2">
          <Field id="child" label={<><u>C</u>hild</>} value="" narrow />
          <Field id="drill" label="Drill type" value="Drill To Child Unit" narrow />
        </div>
        <div className="mt-[33px] pl-2">
          <Field id="bridging" label={<><u>B</u>ridging table</>} value="" disabled narrow />
        </div>

        <h3 className="mt-[26px] leading-4 text-xs font-bold font-['Liberation_Sans',Arial,sans-serif]">Appearance</h3>
        <div className="flex gap-3 mt-0.5 pl-3">
          <div className="w-[100px]">
            <label htmlFor="display" className="block leading-4">Display</label>
            <Select id="display" value="ID, Descriptor" />
          </div>
          <div className="w-[145px]">
            <label htmlFor="sorting" className="block leading-4">Sorting</label>
            <Select id="sorting" value="ID - Ascending" />
          </div>
        </div>
        <div className="flex justify-end mt-[7px] pr-5">
          <button className="w-[77px] h-[23px] border border-[#adadad] bg-[#e1e1e1]">Advanced...</button>
        </div>
      </div>
    </div>
  </aside>
);

/* ---------- Status bar ---------- */

const StatusBar = () => (
  <footer className="flex items-center shrink-0 h-5 pl-[3px] border-t border-[#d7d7d7]">
    <span className="w-[122px]">Ready</span>
    <span className="flex-1 pl-1 border-l border-[#d0d0d0]">Select an object to show and edit. Drag objects to move or link.</span>
    <span className="pl-1 border-l border-[#d0d0d0]">Ver: 20140</span>
    <svg width="9" height="9" className="ml-[7px] mr-0.5 self-end mb-0.5" fill="#bfbfbf" aria-hidden="true">
      <path d="M6 0h2v2H6zM3 3h2v2H3zM6 3h2v2H6zM0 6h2v2H0zM3 6h2v2H3zM6 6h2v2H6z" />
    </svg>
  </footer>
);

const App = () => {
  return (
    <div className="h-screen px-[7px] pb-[7px] bg-black">
      <div className="flex flex-col h-full overflow-hidden bg-[#f0f0f0] text-[11px] leading-4 text-black font-['Open_Sans','Noto_Sans',sans-serif]">
        <TitleBar />
        <RibbonTabs />
        <Ribbon />
        <div className="flex flex-1 min-h-0">
          <aside className="flex flex-col w-[265px] shrink-0 pt-px pb-px pl-px">
            <ObjectTree />
            <InfoPanel />
          </aside>
          <Splitter />
          <Workspace />
          <Splitter />
          <PropertiesPanel />
        </div>
        <StatusBar />
      </div>
    </div>
  );
};

export default App;
